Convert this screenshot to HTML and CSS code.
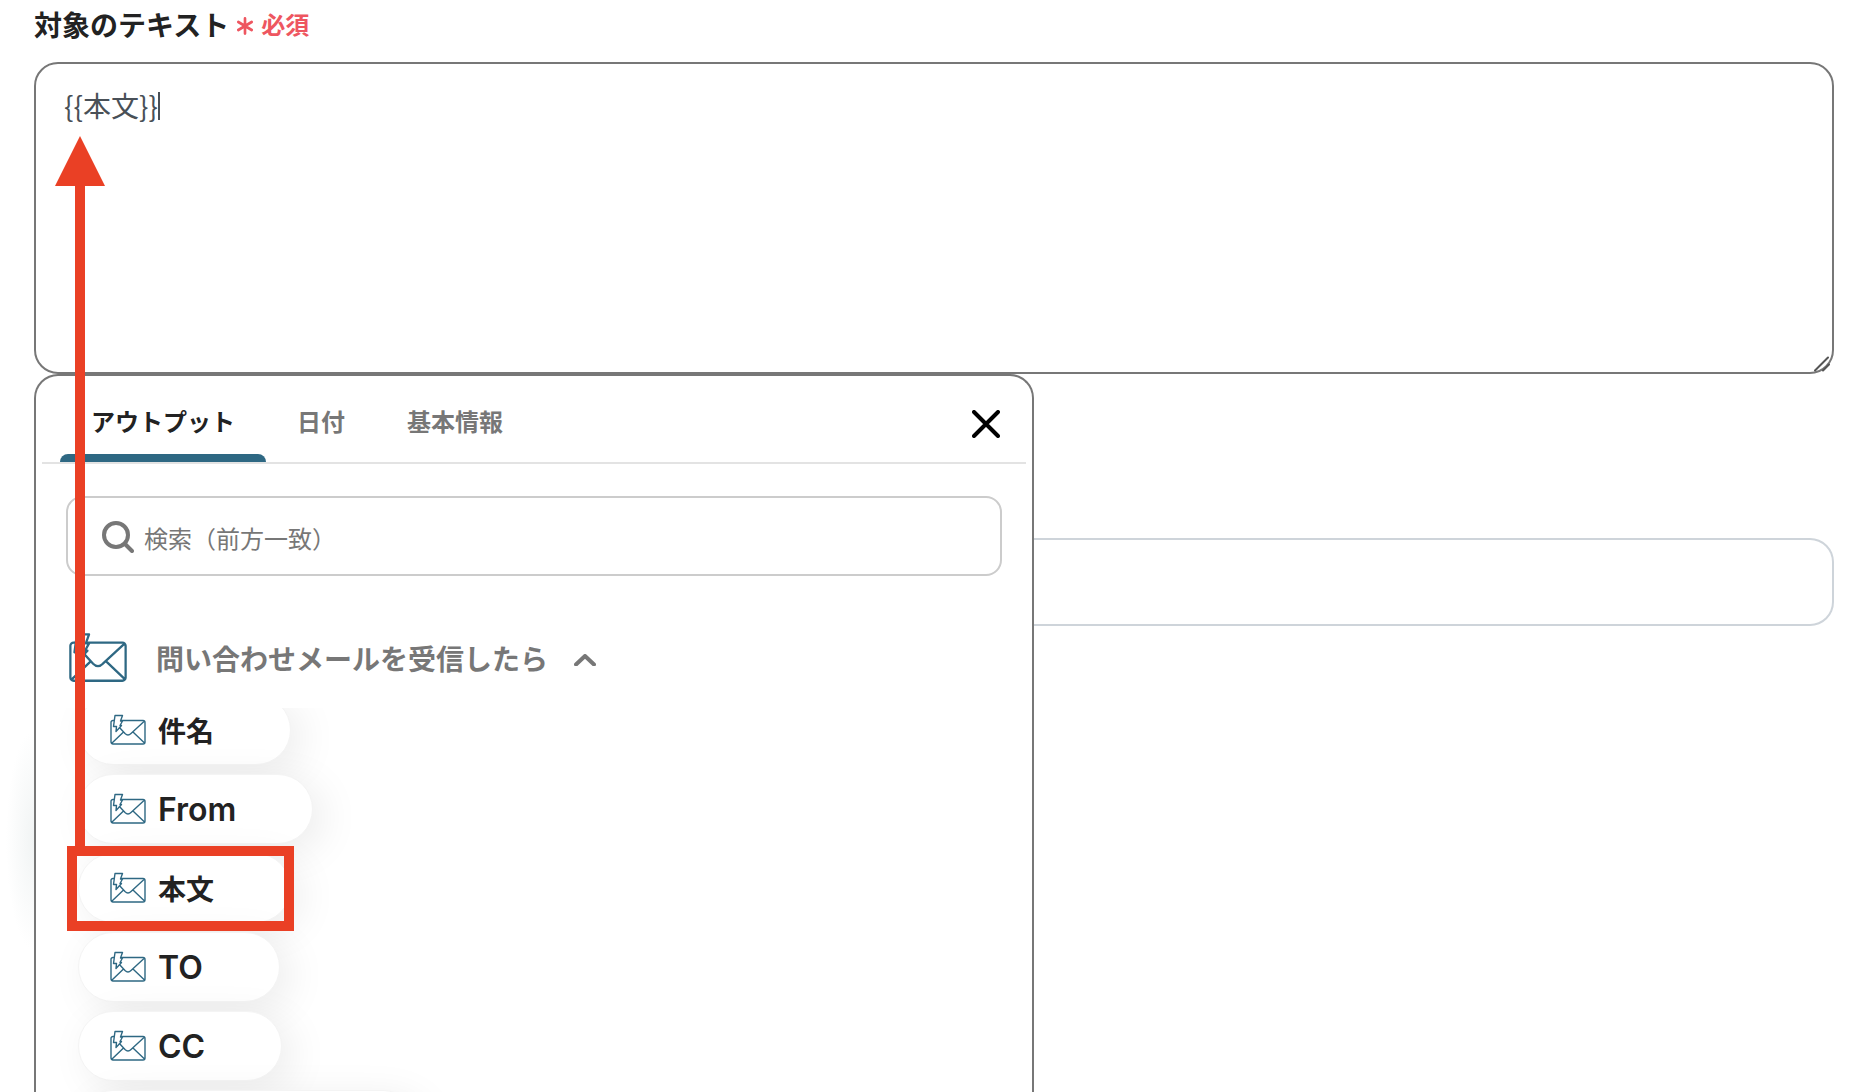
FILE: index.html
```html
<!DOCTYPE html>
<html lang="ja">
<head>
<meta charset="utf-8">
<meta name="viewport" content="width=device-width, initial-scale=1">
<title>対象のテキスト</title>
<link rel="stylesheet" href="styles.css">
</head>
<body>
<svg class="symbols" aria-hidden="true">
  <symbol id="mail" viewBox="0 0 36 32">
    <path d="M1 27V8.500a2 2 0 0 1 2-2H33a2 2 0 0 1 2 2V28a2 2 0 0 1-2 2H3a2 2 0 0 1-2-2ZM2 29 13 18.500M34.500 29 23.500 18.500M34 7.500 21 19.500Q18 22.500 15 19.500L9 13"/>
    <path class="bolt" d="M5 1.500H12.500L10.500 7H12.500L10 11.500H11.500L6 17.500 6.500 12.500H3.500Z"/>
  </symbol>
</svg>
<main class="form">
  <div class="field">
    <label class="field-label" for="target">対象のテキスト <span class="required"><svg class="asterisk" viewBox="0 0 18 20" aria-hidden="true"><path d="M9 1.500V18.500M1.500 5.500 16.500 14.500M16.500 5.500 1.500 14.500"/></svg>必須</span></label>
    <div class="area-wrap">
      <textarea class="area" id="target">{{本文}}</textarea>
      <span class="caret"></span>
      <svg class="grip" viewBox="0 0 16 16" aria-hidden="true"><path d="M1 14.500 14 1.500M9 14.500 15 8.500"/></svg>
    </div>
  </div>
  <div class="below">
    <section class="panel">
      <div class="tabs">
        <button class="tab tab-active" type="button">アウトプット</button>
        <button class="tab" type="button">日付</button>
        <button class="tab" type="button">基本情報</button>
        <button class="close" type="button" aria-label="閉じる"><svg viewBox="0 0 28 28"><path d="M2 2 26 26M26 2 2 26"/></svg></button>
      </div>
      <div class="search">
        <svg viewBox="0 0 32 32" aria-hidden="true"><circle cx="14" cy="14" r="12"/><path d="M23 23 30 30"/></svg>
        <input type="search" aria-label="検索" placeholder="検索（前方一致）">
      </div>
      <button class="group" type="button">
        <svg class="group-mail mail" aria-hidden="true"><use href="#mail"/></svg>
        <span>問い合わせメールを受信したら</span>
        <svg class="chevron" viewBox="0 0 22 12" aria-hidden="true"><path d="M2 10.500 11 2 20 10.500"/></svg>
      </button>
      <div class="chips">
        <button class="chip" type="button"><svg class="mail" aria-hidden="true"><use href="#mail"/></svg>件名</button>
        <button class="chip latin" type="button"><svg class="mail" aria-hidden="true"><use href="#mail"/></svg>From</button>
        <button class="chip" type="button"><svg class="mail" aria-hidden="true"><use href="#mail"/></svg>本文</button>
        <button class="chip latin" type="button"><svg class="mail" aria-hidden="true"><use href="#mail"/></svg>TO</button>
        <button class="chip latin" type="button"><svg class="mail" aria-hidden="true"><use href="#mail"/></svg>CC</button>
        <button class="chip chip-wide" type="button" aria-label="次の項目"></button>
      </div>
    </section>
    <input class="next-input" type="text" aria-label="次の入力欄">
  </div>
</main>
<svg class="annotation" viewBox="0 0 300 940" aria-hidden="true">
  <path class="fill" d="M80 136 105 186H85V850H75V186H55Z"/>
  <path class="frame" d="M72 851H289V926H72Z"/>
</svg>
</body>
</html>
```
FILE: styles.css
```css
* { box-sizing: border-box; }
html { height: 100%; overflow: hidden; }
body {
  position: relative;
  height: 100%;
  margin: 0;
  overflow: hidden;
  background: #fff;
  color: #222;
  font-family: "Noto Sans CJK JP", sans-serif;
}
button, input, textarea { margin: 0; font-family: inherit; color: inherit; }
button { padding: 0; border: 0; background: none; }
svg { display: block; flex: none; fill: none; stroke-linecap: round; stroke-linejoin: round; }
.symbols { position: absolute; width: 0; height: 0; }

.form {
  display: flex;
  flex-direction: column;
  height: 100%;
  padding: 0 28px 0 34px;
  background: radial-gradient(28px 110px at 34px 840px, #f1f4f4, #fff);
}
.field-label {
  display: flex;
  align-items: center;
  gap: 8px;
  height: 48px;
  font-size: 28px;
  line-height: 48px;
  font-weight: 700;
}
.required { display: flex; align-items: center; gap: 8px; font-size: 24px; color: #ee5660; }
.asterisk { width: 16px; height: 18px; margin-top: 4px; stroke: currentColor; stroke-width: 3; }
.area-wrap { position: relative; margin-top: 14px; }
.area {
  display: block;
  width: 100%;
  height: 312px;
  padding: 20px 28px;
  border: 2px solid #777;
  border-radius: 24px;
  outline: 0;
  resize: none;
  background: #fff;
  color: #495057;
  font-size: 28px;
  line-height: 42px;
}
.caret { position: absolute; left: 124px; top: 30px; width: 2px; height: 28px; background: #495057; }
.grip { position: absolute; right: 4px; bottom: 2px; width: 16px; height: 16px; stroke: #555; stroke-width: 2; }

.below { display: flex; flex: 1; align-items: flex-start; min-height: 0; }
.panel {
  display: flex;
  flex-direction: column;
  align-self: stretch;
  width: 1000px;
  flex: none;
  border: 2px solid #777;
  border-bottom: 0;
  border-radius: 24px 24px 0 0;
  background: #fff;
}
.next-input {
  flex: 1;
  min-width: 0;
  height: 88px;
  margin-top: 164px;
  padding: 0 28px;
  border: 2px solid #ced4da;
  border-left: 0;
  border-radius: 0 24px 24px 0;
  font-size: 28px;
}
.tabs {
  display: flex;
  flex: none;
  height: 88px;
  margin: 0 6px;
  padding-left: 18px;
  border-bottom: 2px solid #e3e3e3;
}
.tab {
  position: relative;
  padding: 2px 31px 0;
  font-size: 24px;
  font-weight: 700;
  color: #777;
}
.tab-active { color: #222; }
.tab-active::after {
  content: "";
  position: absolute;
  left: 0;
  right: 0;
  bottom: 0;
  height: 8px;
  border-radius: 8px 8px 0 0;
  background: #2e6883;
}
.close { margin: 10px 26px 0 auto; }
.close svg { width: 28px; height: 28px; stroke: #000; stroke-width: 4; }
.search {
  display: flex;
  flex: none;
  align-items: center;
  gap: 10px;
  height: 80px;
  margin: 32px 30px 0;
  padding: 2px 34px 0;
  border: 2px solid #ccc;
  border-radius: 16px;
}
.search svg { width: 32px; height: 32px; stroke: #777; stroke-width: 4; }
.search input { flex: 1; min-width: 0; height: 48px; padding: 0; border: 0; outline: 0; background: none; font-size: 24px; }
.search input::placeholder { color: #777; opacity: 1; }
.group {
  display: flex;
  flex: none;
  align-items: center;
  height: 64px;
  margin: 50px 32px 0;
  padding: 0;
  font-size: 28px;
  font-weight: 700;
  color: #777;
}
.mail { width: 36px; height: 32px; stroke: #2e6883; stroke-width: 1.4; }
.bolt { fill: #fff; }
.group-mail { width: 60px; height: 52px; margin-right: 28px; }
.chevron { width: 22px; height: 12px; margin: 4px 0 0 26px; stroke: #777; stroke-width: 4; }
.chips {
  display: flex;
  flex: 1;
  flex-direction: column;
  align-items: flex-start;
  gap: 9px;
  min-height: 0;
  margin-top: 18px;
  padding-left: 42px;
  overflow: hidden;
}
.chip {
  display: flex;
  flex: none;
  align-items: center;
  gap: 12px;
  height: 70px;
  padding: 0 76px 0 31px;
  border: 1px solid #f4f4f4;
  border-radius: 35px;
  background: #fff;
  box-shadow: 10px 8px 40px rgba(0, 0, 0, .08);
  font-size: 28px;
  font-weight: 700;
}
.chip:first-child { margin-top: -13px; }
.latin { font-family: Inter, sans-serif; font-size: 32px; font-weight: 600; }
.chip-wide { width: 340px; }
.annotation { position: absolute; left: 0; top: 0; width: 300px; height: 940px; pointer-events: none; stroke-linejoin: miter; }
.annotation .fill { fill: #ea4025; }
.annotation .frame { stroke: #ea4025; stroke-width: 10; }
```
